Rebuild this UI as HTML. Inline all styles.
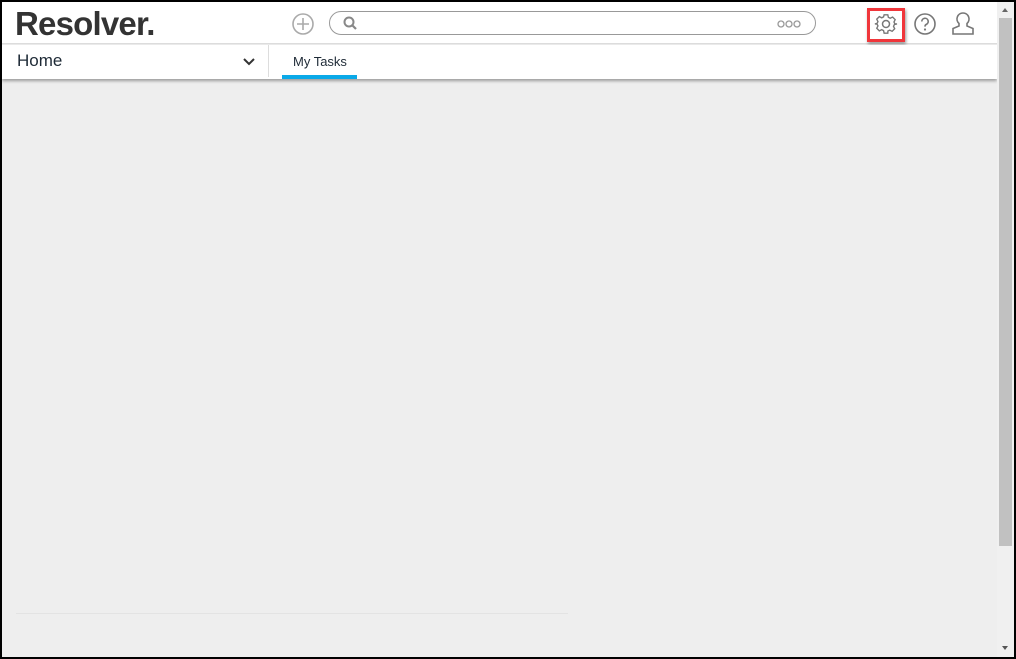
<!DOCTYPE html>
<html><head><style>
*{margin:0;padding:0;box-sizing:border-box}
body{width:1016px;height:659px;overflow:hidden;background:#000;font-family:"Liberation Sans",sans-serif;position:relative}
#f{position:absolute;left:2px;top:2px;width:1012px;height:655px;background:#eee;overflow:hidden}
#top{position:absolute;left:0;top:0;width:995px;height:42px;background:#fff;border-bottom:1px solid #ddd}
#nav{position:absolute;left:0;top:43px;width:995px;height:34px;background:#fff;box-shadow:0 2px 3px rgba(0,0,0,.35)}
.logo{position:absolute;left:13px;top:3px;font-size:33px;font-weight:bold;color:#333;letter-spacing:-0.8px}
#sb{position:absolute;left:995px;top:0;width:17px;height:655px;background:#f0f0f0}
#thumb{position:absolute;left:2px;top:16px;width:13px;height:528px;background:#c1c1c1}
</style></head><body><div id="f">
<div id="top"><div class="logo">Resolver.</div>
<svg style="position:absolute;left:289px;top:10px" width="24" height="24"><circle cx="12" cy="12" r="10" fill="none" stroke="#aaa" stroke-width="1.6"/><path d="M12 6v12M6 12h12" stroke="#aaa" stroke-width="1.6"/></svg>
<div style="position:absolute;left:327px;top:9px;width:487px;height:24px;border:1px solid #999;border-radius:12px"></div>
<svg style="position:absolute;left:340px;top:13px" width="16" height="16"><circle cx="7" cy="7" r="4.5" fill="none" stroke="#888" stroke-width="2"/><path d="M10 10l4 4" stroke="#888" stroke-width="2.2"/></svg>
<svg style="position:absolute;left:775px;top:17px" width="26" height="10"><g fill="none" stroke="#999" stroke-width="1.3"><circle cx="4" cy="5" r="3"/><circle cx="12" cy="5" r="3"/><circle cx="20" cy="5" r="3"/></g></svg>
<div style="position:absolute;left:865px;top:6px;width:38px;height:34px;border:3px solid #f0363b;box-shadow:1px 2px 3px rgba(0,0,0,.4)"></div>
<svg style="position:absolute;left:872px;top:10px" width="24" height="24" viewBox="0 0 24 24"><path fill="none" stroke="#777" stroke-width="1.5" d="M10 2h4l.6 2.8 2 1 2.6-1.3 2.8 2.8-1.3 2.6 1 2L24 12l0 0-2.8.6-1 2 1.3 2.6-2.8 2.8-2.6-1.3-2 1L14 22h-4l-.6-2.8-2-1-2.6 1.3-2.8-2.8 1.3-2.6-1-2L0 12l2.3-.6 1-2L2 6.8 4.8 4l2.6 1.3 2-1z" transform="scale(.92) translate(1 1)"/><circle cx="12" cy="12" r="3.5" fill="none" stroke="#777" stroke-width="1.5"/></svg>
<svg style="position:absolute;left:911px;top:10px" width="24" height="24"><circle cx="12" cy="12" r="10" fill="none" stroke="#777" stroke-width="1.6"/><path d="M8.8 9.5a3.2 3.2 0 1 1 4.5 2.9c-1 .5-1.3 1.1-1.3 2.2" fill="none" stroke="#777" stroke-width="1.6"/><circle cx="12" cy="17.5" r="1.1" fill="#777"/></svg>
<svg style="position:absolute;left:949px;top:9px" width="24" height="26"><path d="M12 2a6 6 0 0 0-4 10.5v2.5L2 17.5V23h20v-5.5L16 15v-2.5A6 6 0 0 0 12 2z" fill="none" stroke="#777" stroke-width="1.6"/></svg>
</div>
<div id="nav">
<div style="position:absolute;left:15px;top:6px;font-size:17px;color:#1e2a36">Home</div>
<svg style="position:absolute;left:241px;top:13px" width="12" height="8"><path d="M1 1l5 5 5-5" fill="none" stroke="#333" stroke-width="2"/></svg>
<div style="position:absolute;left:266px;top:0;width:1px;height:32px;background:#ddd"></div>
<div style="position:absolute;left:291px;top:9px;font-size:13px;color:#1e2a36">My Tasks</div>
<div style="position:absolute;left:280px;top:30px;width:75px;height:4px;background:#0aa9e8"></div>
</div>
<div style="position:absolute;left:14px;top:611px;width:552px;height:1px;background:#e3e3e3"></div>
<div id="sb"><div id="thumb"></div>
<div style="position:absolute;left:5px;top:6px;border:3.5px solid transparent;border-bottom:4px solid #666;border-top:0"></div>
<div style="position:absolute;left:5px;top:644px;border:3.5px solid transparent;border-top:4px solid #555;border-bottom:0"></div></div>
</div></body></html>
